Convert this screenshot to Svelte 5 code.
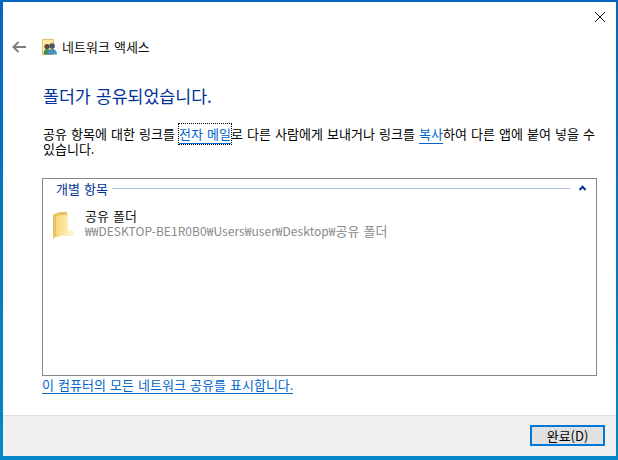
<script lang="ts">
	const items = [
		{ name: '공유 폴더', root: '₩₩DESKTOP-BE1R0B0₩Users₩user₩Desktop₩', leaf: '공유 폴더' }
	];
</script>

<div class="window">
	<button class="close" aria-label="닫기">
		<svg width="12" height="12" viewBox="0 0 12 12"><path d="M1 1l10 10M11 1L1 11" stroke="#111" stroke-width="1" fill="none" /></svg>
	</button>

	<main class="content">
		<div class="nav">
			<svg class="back" width="14" height="12" viewBox="0 0 14 12">
				<path d="M6.500 1L1.500 6l5 5M2 6h12" stroke="#7f7f7f" stroke-width="2" fill="none" />
			</svg>
			<svg class="nav-icon" width="15" height="16" viewBox="0 0 15 16">
				<rect x="0.500" y="0.500" width="11" height="15" fill="#fde9a0" stroke="#e2c35c" />
				<circle cx="5" cy="7.500" r="2.600" fill="#5e4634" />
				<path d="M1.500 15.500c0-3.500 1-5.500 3.500-5.500s3.500 2 3.500 5.500z" fill="#3f8a68" />
				<circle cx="10" cy="7" r="2.800" fill="#465464" />
				<path d="M6 15.500c0-3.500 1.500-5.800 4-5.800s5 2.300 5 5.800z" fill="#4a90c0" />
			</svg>
			<span class="nav-title">네트워크 액세스</span>
		</div>

		<h1>폴더가 공유되었습니다.</h1>

		<p class="desc">공유 항목에 대한 링크를 <a class="focused" href="#mail">전자 메일</a>로 다른 사람에게 보내거나 링크를 <a href="#copy">복사</a>하여 다른 앱에 붙여 넣을 수 있습니다.</p>

		<section class="group">
			<div class="group-head">
				<span class="group-label">개별 항목</span>
				<span class="group-line"></span>
				<svg class="chevron" width="7" height="6" viewBox="0 0 7 6">
					<path d="M0.400 5L3.500 1.800 6.600 5" stroke="#003399" stroke-width="2" fill="none" />
				</svg>
			</div>
			{#each items as item}
				<div class="item">
					<svg class="folder" width="20" height="27" viewBox="0 0 20 27">
						<defs>
							<linearGradient id="folder-front" x1="0" y1="0" x2="1" y2="0">
								<stop offset="0" stop-color="#f8d77e" />
								<stop offset="1" stop-color="#fdeaa6" />
							</linearGradient>
						</defs>
						<path d="M0 2.500l7-2.500h7v21H7l-7 6z" fill="#e6c262" />
						<path d="M14 2h1v16h5v6H4l10-3z" fill="#fef1bf" />
						<path d="M3 4l11-1.500V21L3 25.500z" fill="url(#folder-front)" />
					</svg>
					<div class="item-text">
						<div class="item-name">{item.name}</div>
						<div class="item-path"><span class="path-root">{item.root}</span>{item.leaf}</div>
					</div>
				</div>
			{/each}
		</section>

		<a class="all-shares" href="#all">이 컴퓨터의 모든 네트워크 공유를 표시합니다.</a>
	</main>

	<footer>
		<button class="done">완료(D)</button>
	</footer>
</div>

<style>
	:global(body) {
		margin: 0;
		background: #0a6cc4;
	}

	.window {
		position: relative;
		box-sizing: border-box;
		width: 618px;
		height: 460px;
		display: flex;
		flex-direction: column;
		padding: 2px 2px 4px 3px;
		background: linear-gradient(180deg, #0466c0 0%, #0488c8 100%);
		font-family: 'Noto Sans CJK KR', 'Noto Sans', sans-serif;
		font-size: 13px;
		word-spacing: 1.200px;
		color: #000;
	}

	.close {
		position: absolute;
		top: 11px;
		right: 12px;
		padding: 0;
		border: 0;
		background: none;
		line-height: 0;
	}

	.content {
		flex: 1;
		display: flex;
		flex-direction: column;
		padding: 0 0 0 39px;
		background: #fff;
		min-height: 0;
	}

	.nav {
		display: flex;
		align-items: center;
		height: 16px;
		margin-top: 37px;
	}

	.back {
		margin-left: -30px;
		margin-right: 16px;
	}

	.nav-title {
		margin-left: 5px;
		line-height: 16px;
		color: #111;
	}

	h1 {
		margin: 30px 0 0 1px;
		font-size: 17.300px;
		font-weight: 400;
		line-height: 22px;
		color: #003399;
	}

	.desc {
		margin: 19px 19px 0 1px;
		line-height: 15px;
		color: #000;
	}

	a {
		color: #0066cc;
		text-decoration: none;
		border-bottom: 1px solid #0066cc;
	}

	.focused {
		outline: 1px dotted #000;
		outline-offset: 0;
	}

	.group {
		box-sizing: border-box;
		width: 555px;
		height: 198px;
		margin-top: 22px;
		border: 1px solid #888;
		background: #fff;
	}

	.group-head {
		display: flex;
		align-items: center;
		height: 18px;
		padding: 0 10px 0 13px;
		color: #003399;
	}

	.group-line {
		flex: 1;
		height: 1px;
		margin: 0 9px 0 4px;
		background: #a9bfe0;
	}

	.item {
		display: flex;
		margin: 15px 0 0 10px;
	}

	.item-text {
		margin-left: 12px;
		margin-top: -4px;
	}

	.item-name {
		line-height: 15px;
		color: #111;
	}

	.item-path {
		line-height: 15px;
		color: #8a8a8a;
	}

	.path-root {
		font-size: 12px;
		letter-spacing: 0.050px;
	}

	.all-shares {
		align-self: flex-start;
		margin-top: 1px;
		line-height: 16px;
	}

	footer {
		height: 41px;
		box-sizing: border-box;
		flex: none;
		display: flex;
		justify-content: flex-end;
		align-items: flex-start;
		padding: 9px 11px 0 0;
		background: #f0f0f0;
		border-top: 1px solid #dfdfdf;
	}

	.done {
		box-sizing: border-box;
		width: 75px;
		height: 21px;
		padding: 0;
		border: 2px solid #0078d7;
		background: #e1e1e1;
		font: inherit;
		line-height: 15px;
		color: #000;
	}
</style>
